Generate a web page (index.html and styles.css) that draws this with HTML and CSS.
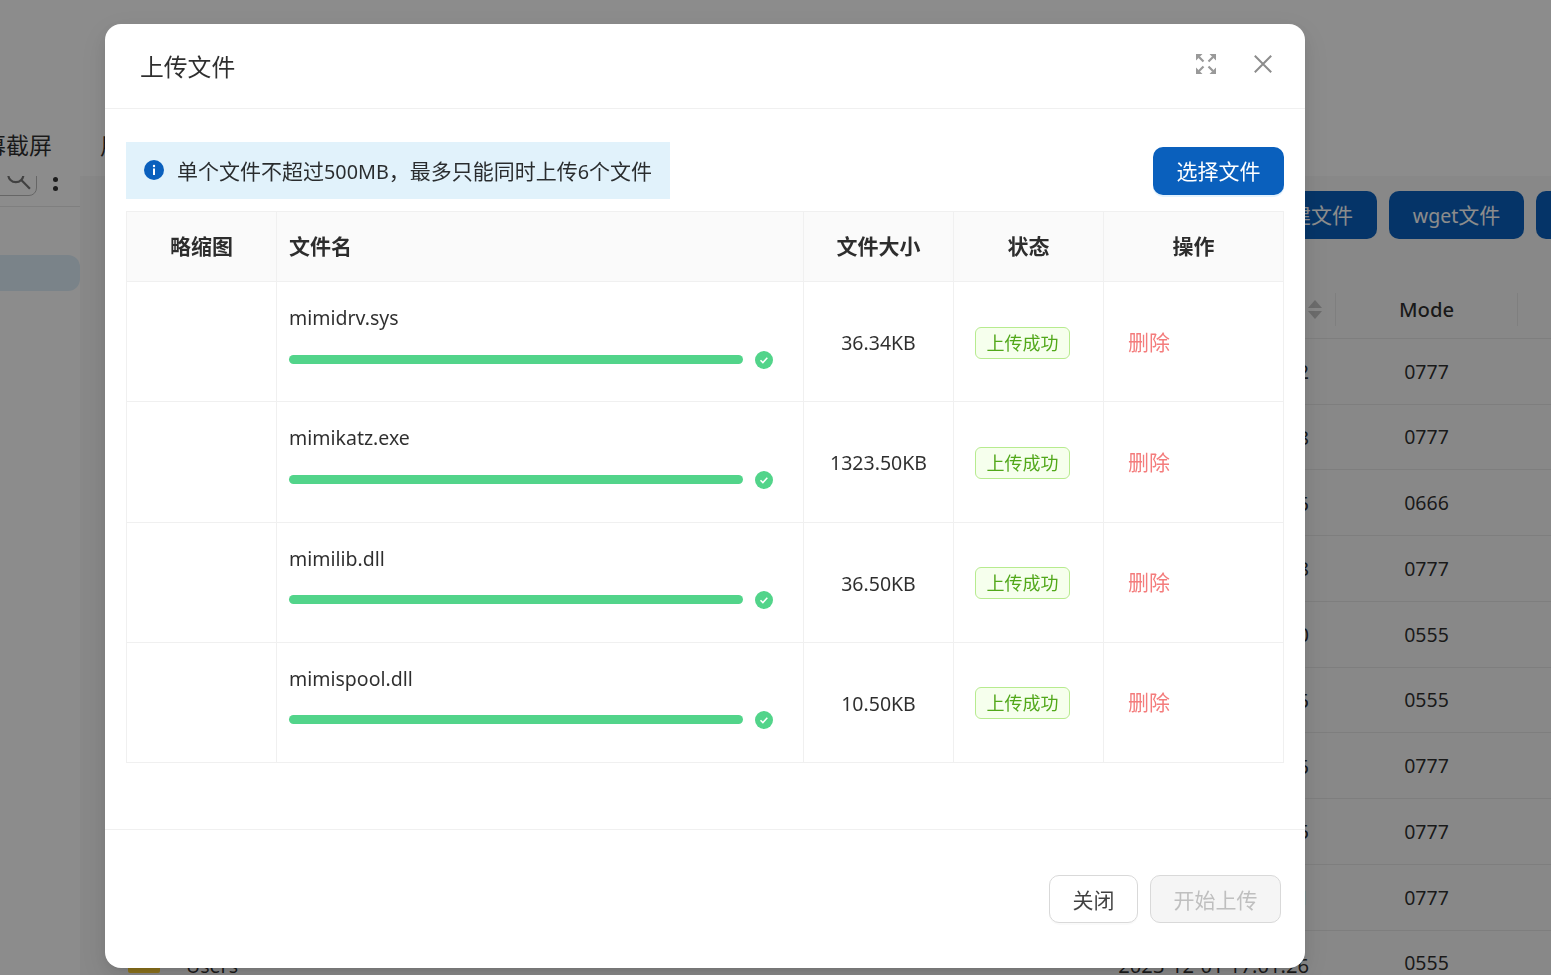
FILE: index.html
```html
<!DOCTYPE html>
<html lang="zh-CN">
<head>
<meta charset="utf-8">
<title>上传文件</title>
<link rel="stylesheet" href="styles.css">
</head>
<body>
<div class="page">
  <div class="page-head">
    <span class="page-tab page-tab-first">屏幕截屏</span>
    <span class="page-tab">用户列表</span>
  </div>
  <div class="page-main">
    <aside class="sidebar">
      <div class="side-tools">
        <span class="side-search">
          <svg viewBox="0 0 24 24" width="26" height="26" class="side-search-icon"><circle cx="10" cy="7" r="7"/><path d="M15 12l8 8"/></svg>
        </span>
        <span class="side-dots"><i></i><i></i></span>
      </div>
      <div class="side-item"></div>
    </aside>
    <section class="files">
      <div class="file-actions">
        <button class="bg-btn bg-btn-first">新建文件</button>
        <button class="bg-btn bg-btn-wget"><span class="lat">wget</span>文件</button>
        <button class="bg-btn bg-btn-last">上传</button>
      </div>
      <div class="file-row file-head">
        <span class="f-name"></span>
        <span class="f-date"></span>
        <span class="f-sort"><i class="up"></i><i class="down"></i></span>
        <span class="f-mode f-mode-head">Mode</span>
      </div>
      <div class="file-row"><span class="f-name"></span><span class="f-date">2023-12-01 17:01:22</span><span class="f-sort"></span><span class="f-mode">0777</span></div>
      <div class="file-row"><span class="f-name"></span><span class="f-date">2023-12-01 17:01:28</span><span class="f-sort"></span><span class="f-mode">0777</span></div>
      <div class="file-row"><span class="f-name"></span><span class="f-date">2023-12-01 17:01:25</span><span class="f-sort"></span><span class="f-mode">0666</span></div>
      <div class="file-row"><span class="f-name"></span><span class="f-date">2023-12-01 17:01:28</span><span class="f-sort"></span><span class="f-mode">0777</span></div>
      <div class="file-row"><span class="f-name"></span><span class="f-date">2023-12-01 17:01:20</span><span class="f-sort"></span><span class="f-mode">0555</span></div>
      <div class="file-row"><span class="f-name"></span><span class="f-date">2023-12-01 17:01:25</span><span class="f-sort"></span><span class="f-mode">0555</span></div>
      <div class="file-row"><span class="f-name"></span><span class="f-date">2023-12-01 17:01:25</span><span class="f-sort"></span><span class="f-mode">0777</span></div>
      <div class="file-row"><span class="f-name"></span><span class="f-date">2023-12-01 17:01:25</span><span class="f-sort"></span><span class="f-mode">0777</span></div>
      <div class="file-row"><span class="f-name"></span><span class="f-date">2023-12-01 17:01:11</span><span class="f-sort"></span><span class="f-mode">0777</span></div>
      <div class="file-row file-row-last"><span class="f-name"><i class="folder"></i>Users</span><span class="f-date">2023-12-01 17:01:26</span><span class="f-sort"></span><span class="f-mode">0555</span></div>
    </section>
  </div>
</div>

<div class="mask"></div>

<div class="modal">
  <header class="modal-head">
    <h1 class="modal-title">上传文件</h1>
    <div class="modal-tools">
      <svg class="tool-icon tool-full" viewBox="0 0 20 20" width="20" height="20">
        <path class="head" d="M0 0h6.5L0 6.5z M20 0v6.500L13.500 0z M20 20h-6.500L20 13.500z M0 20v-6.500L6.500 20z"/>
        <path class="stem" d="M3 3l4.500 4.500 M17 3l-4.500 4.500 M17 17l-4.500-4.500 M3 17l4.500-4.500"/>
      </svg>
      <svg class="tool-icon tool-close" viewBox="0 0 20 20" width="20" height="20"><path d="M1.800 1.800l16.400 16.400M18.200 1.800L1.800 18.200"/></svg>
    </div>
  </header>

  <div class="modal-body">
    <div class="upload-bar">
      <div class="alert">
        <svg class="alert-icon" viewBox="0 0 20 20" width="20" height="20"><circle cx="10" cy="10" r="10"/><rect x="9" y="8.500" width="2" height="6.500" fill="#fff"/><circle cx="10" cy="6" r="1.200" fill="#fff"/></svg>
        <span>单个文件不超过<span class="lat lat-wide">500MB</span>，最多只能同时上传<span class="lat lat-wide">6</span>个文件</span>
      </div>
      <button class="btn btn-primary">选择文件</button>
    </div>

    <table class="up-table">
      <colgroup><col class="c-thumb"><col class="c-name"><col class="c-size"><col class="c-state"><col class="c-op"></colgroup>
      <thead>
        <tr><th>略缩图</th><th class="left">文件名</th><th>文件大小</th><th>状态</th><th>操作</th></tr>
      </thead>
      <tbody>
        <tr>
          <td></td>
          <td class="left file"><div class="fname">mimidrv.sys</div><div class="progress"><span class="bar"></span><svg class="ok" viewBox="0 0 18 18" width="18" height="18"><circle cx="9" cy="9" r="9"/><path d="M5.500 9.200l2.400 2.400 4.400-4.800"/></svg></div></td>
          <td class="size">36.34KB</td>
          <td class="state"><span class="tag">上传成功</span></td>
          <td class="op"><span class="del">删除</span></td>
        </tr>
        <tr>
          <td></td>
          <td class="left file"><div class="fname">mimikatz.exe</div><div class="progress"><span class="bar"></span><svg class="ok" viewBox="0 0 18 18" width="18" height="18"><circle cx="9" cy="9" r="9"/><path d="M5.500 9.200l2.400 2.400 4.400-4.800"/></svg></div></td>
          <td class="size">1323.50KB</td>
          <td class="state"><span class="tag">上传成功</span></td>
          <td class="op"><span class="del">删除</span></td>
        </tr>
        <tr>
          <td></td>
          <td class="left file"><div class="fname">mimilib.dll</div><div class="progress"><span class="bar"></span><svg class="ok" viewBox="0 0 18 18" width="18" height="18"><circle cx="9" cy="9" r="9"/><path d="M5.500 9.200l2.400 2.400 4.400-4.800"/></svg></div></td>
          <td class="size">36.50KB</td>
          <td class="state"><span class="tag">上传成功</span></td>
          <td class="op"><span class="del">删除</span></td>
        </tr>
        <tr>
          <td></td>
          <td class="left file"><div class="fname">mimispool.dll</div><div class="progress"><span class="bar"></span><svg class="ok" viewBox="0 0 18 18" width="18" height="18"><circle cx="9" cy="9" r="9"/><path d="M5.500 9.200l2.400 2.400 4.400-4.800"/></svg></div></td>
          <td class="size">10.50KB</td>
          <td class="state"><span class="tag">上传成功</span></td>
          <td class="op"><span class="del">删除</span></td>
        </tr>
      </tbody>
    </table>
  </div>

  <footer class="modal-foot">
    <button class="btn btn-default">关闭</button>
    <button class="btn btn-disabled">开始上传</button>
  </footer>
</div>
</body>
</html>
```
FILE: styles.css
```css
* { box-sizing: border-box; }
html, body { margin: 0; height: 100%; overflow: hidden; }
body {
  font-family: "Noto Sans", "Noto Sans CJK SC", sans-serif;
  font-size: 19.5px;
  color: rgba(0, 0, 0, 0.82);
  background: #fff;
}
.lat { font-size: 19.5px; }
.lat-wide { font-size: 19.8px; }

/* page behind the dialog */
.page { height: 975px; overflow: hidden; display: flex; flex-direction: column; }
.page-head {
  height: 176px;
  padding-top: 129px;
  display: flex;
  gap: 48px;
  font-size: 23px;
  line-height: 32px;
  white-space: nowrap;
  margin-left: -40px;
}
.page-main { flex: 1; display: flex; min-height: 0; }
.sidebar { width: 80px; flex: none; overflow: hidden; }
.side-tools {
  height: 31px;
  display: flex;
  align-items: flex-end;
  border-bottom: 1px solid #e8e8e8;
}
.side-search {
  width: 60px;
  height: 40px;
  margin: 0 0 10px -23px;
  flex: none;
  border: 1px solid #bbb;
  border-radius: 8px;
  display: flex;
  justify-content: flex-end;
  padding: 10px 5px 0 0;
}
.side-search-icon { fill: none; stroke: #777; stroke-width: 2; }
.side-dots { margin: 0 0 15px 16px; display: flex; flex-direction: column; gap: 4px; }
.side-dots i { width: 5px; height: 5px; border-radius: 50%; background: #333; display: block; }
.side-item {
  height: 36px;
  margin-top: 48px;
  background: #dfeffa;
  border-radius: 0 12px 12px 0;
}
.files {
  flex: 1;
  min-width: 0;
  background: #f7f7f7;
  overflow: hidden;
}
.file-actions {
  height: 105px;
  padding: 15px 0 0;
  display: flex;
  gap: 12px;
  justify-content: flex-end;
  margin-right: -100px;
}
.bg-btn {
  height: 48px;
  border: 0;
  border-radius: 10px;
  background: #0a60bd;
  color: #fff;
  font: inherit;
  font-size: 21px;
  padding: 0 0 2px;
  flex: none;
}
.bg-btn-first { width: 132px; }
.bg-btn-wget { width: 135px; }
.bg-btn-last { width: 115px; }
.file-row {
  height: 65.75px;
  margin-left: 30px;
  display: flex;
  align-items: center;
  border-bottom: 1px solid #e6e6e6;
}
.file-head { height: 57.8px; font-weight: 500; }
.f-name { padding-left: 18px; flex: 1; display: flex; align-items: center; gap: 26px; }
.folder { width: 32px; height: 16px; background: #ffcf33; border-radius: 2px; display: block; }
.f-date { width: 200px; text-align: right; white-space: nowrap; font-size: 20.2px; }
.file-row-last .f-name, .file-row-last .f-date { padding-top: 5px; }
.f-sort {
  width: 26px;
  display: flex;
  flex-direction: column;
  align-items: flex-start;
  gap: 3px;
  margin-left: -1px;
  margin-right: 1px;
}
.f-sort i { width: 0; height: 0; border-left: 7px solid transparent; border-right: 7px solid transparent; display: block; }
.f-sort .up { border-bottom: 8px solid #c4c4c4; }
.f-sort .down { border-top: 8px solid #c4c4c4; }
.f-mode { width: 183px; text-align: center; margin-right: 33px; }
.f-mode-head {
  border-left: 1px solid #e8e8e8;
  border-right: 1px solid #e8e8e8;
  height: 33px;
  line-height: 33px;
  margin-top: 1px;
  font-size: 20.3px;
}

/* mask */
.mask { position: fixed; inset: 0; z-index: 10; background: rgba(0, 0, 0, 0.45); }

/* dialog */
.modal {
  position: fixed;
  z-index: 20;
  left: 105px;
  top: 24px;
  width: 1200px;
  height: 944px;
  background: #fff;
  border-radius: 16px;
  display: flex;
  flex-direction: column;
  box-shadow: 0 6px 16px 0 rgba(0, 0, 0, 0.08), 0 3px 6px -4px rgba(0, 0, 0, 0.12), 0 9px 28px 8px rgba(0, 0, 0, 0.05);
}
.modal-head {
  height: 85px;
  flex: none;
  padding: 0 32px 0 35px;
  display: flex;
  justify-content: space-between;
  align-items: center;
  border-bottom: 1px solid #f0f0f0;
}
.modal-title { margin: 0; font-size: 23.800px; font-weight: 400; line-height: 36px; padding-top: 1px; }
.modal-tools { display: flex; align-items: center; gap: 37px; margin-top: -4px; }
.tool-icon { display: block; }
.tool-full .head { fill: #999; }
.tool-full .stem { fill: none; stroke: #999; stroke-width: 2.200; }
.tool-close { fill: none; stroke: #8c8c8c; stroke-width: 2; }

.modal-body { flex: 1; padding: 33px 21px 0; min-height: 0; }
.upload-bar { display: flex; justify-content: space-between; align-items: center; height: 57px; }
.alert {
  height: 57px;
  width: 544px;
  padding: 0 18px 2px;
  display: flex;
  align-items: center;
  gap: 13px;
  background: #e1f2fb;
  font-size: 21px;
  white-space: nowrap;
}
.alert-icon { fill: #0a60bd; flex: none; margin-top: 1px; }
.btn {
  height: 48px;
  border-radius: 10px;
  font: inherit;
  font-size: 21px;
  padding: 0 0 2px;
  cursor: pointer;
}
.btn-primary { width: 131px; border: 0; background: #0a60bd; color: #fff; box-shadow: 0 2px 0 #e3f2fd; }
.btn-default { width: 89px; border: 1px solid #d9d9d9; background: #fff; color: rgba(0, 0, 0, 0.75); box-shadow: 0 2px 0 rgba(0, 0, 0, 0.02); padding: 0; }
.btn-disabled { width: 131px; border: 1px solid #d9d9d9; background: #f5f5f5; color: #bfbfbf; cursor: not-allowed; padding: 0; }

.up-table {
  width: 1158px;
  margin-top: 12px;
  border-collapse: separate;
  border-spacing: 0;
  table-layout: fixed;
  border-top: 1px solid #f0f0f0;
  border-left: 1px solid #f0f0f0;
}
.c-thumb { width: 150px; }
.c-name { width: 527px; }
.c-size { width: 150px; }
.c-state { width: 150px; }
.c-op { width: 180px; }
.up-table th, .up-table td {
  border-right: 1px solid #f0f0f0;
  border-bottom: 1px solid #f0f0f0;
  text-align: center;
  padding: 0 12px;
  vertical-align: middle;
}
.up-table th { height: 70px; background: #fafafa; font-size: 21px; font-weight: 700; padding-bottom: 3px; }
.up-table td { height: 120.250px; }
.up-table .left { text-align: left; }
.up-table .file { vertical-align: top; padding-top: 21px; }
.fname { line-height: 30px; }
.progress { display: flex; align-items: center; gap: 12px; height: 20px; margin-top: 16px; }
.bar { width: 454px; height: 9px; border-radius: 5px; background: #52d48a; display: block; }
.ok { fill: #52d48a; stroke: none; flex: none; margin-top: 1px; }
.ok path { fill: none; stroke: #fff; stroke-width: 1.500; }
.up-table .size { padding-top: 2px; }
.tag {
  display: inline-block;
  width: 95px;
  height: 32px;
  line-height: 30px;
  border: 1px solid #b7eb8f;
  border-radius: 6px;
  background: #f6ffed;
  color: #52a81a;
  font-size: 18px;
  text-align: center;
}
.up-table .state { text-align: left; padding: 2px 0 0 21px; }
.up-table .op { text-align: left; padding: 0 0 2px 24px; }
.del { color: #f47c7c; font-size: 21px; }

.modal-foot {
  height: 139px;
  flex: none;
  border-top: 1px solid #f0f0f0;
  padding: 45px 24px 0 0;
  display: flex;
  justify-content: flex-end;
  gap: 12px;
}
```
